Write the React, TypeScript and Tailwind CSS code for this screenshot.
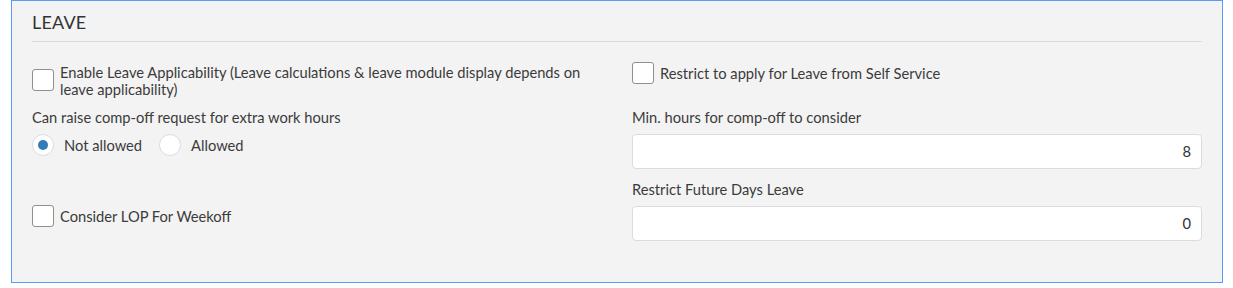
import React from "react";

function Checkbox() {
  return <span className="block w-[22px] h-[22px] shrink-0 rounded-[3px] border border-[#8f8f8f] bg-white" />;
}

function Radio({ checked }: { checked?: boolean }) {
  return (
    <span className="flex w-[22px] h-[22px] shrink-0 items-center justify-center rounded-full border border-[#dcdcdc] bg-white">
      {checked && <span className="block w-[10px] h-[10px] rounded-full bg-[#337ab7]" />}
    </span>
  );
}

function NumInput({ value }: { value: string }) {
  return (
    <div className="h-[35px] w-full rounded-[4px] border border-[#dcdcdc] bg-white flex items-center justify-end pr-[10px] text-[14.7px] text-[#333]">
      {value}
    </div>
  );
}

export default function App() {
  return (
    <div className="w-[1233px] h-[288px] bg-white" style={{ fontFamily: "Lato, 'Open Sans', sans-serif" }}>
      <div className="ml-[11px] w-[1212px] h-[283px] border border-[#5a9bf6] bg-[#f3f3f3] px-[20px] text-[#3b3b3b]">
        <div className="pt-[10px] text-[18px] leading-[22px] text-[#333] tracking-[0.2px]">LEAVE</div>
        <div className="mt-[8px] h-px bg-[#dcdcdc]" />
        <div className="grid grid-cols-2 gap-x-[30px] text-[14.7px]">
          {/* Row A */}
          <div className="mt-[20px] flex items-center gap-[6px]">
            <Checkbox />
            <span className="leading-[17px] pt-[2px] max-w-[545px]">
              Enable Leave Applicability (Leave calculations &amp; leave module display depends on leave applicability)
            </span>
          </div>
          <div className="mt-[20px] flex items-start gap-[6px]">
            <Checkbox />
            <span className="leading-[22px]">Restrict to apply for Leave from Self Service</span>
          </div>
          {/* Row B */}
          <div className="mt-[9px]">
            <div className="leading-[20px]">Can raise comp-off request for extra work hours</div>
            <div className="mt-[7px] flex items-center">
              <Radio checked />
              <span className="ml-[10px]">Not allowed</span>
              <span className="ml-[17px]"><Radio /></span>
              <span className="ml-[10px]">Allowed</span>
            </div>
          </div>
          <div className="mt-[9px]">
            <div className="leading-[20px]">Min. hours for comp-off to consider</div>
            <div className="mt-[7px]">
              <NumInput value="8" />
            </div>
          </div>
          {/* Row C */}
          <div className="mt-[10px] flex items-end">
            <div className="flex items-center gap-[6px] pb-[14px]">
              <Checkbox />
              <span>Consider LOP For Weekoff</span>
            </div>
          </div>
          <div className="mt-[10px]">
            <div className="leading-[20px]">Restrict Future Days Leave</div>
            <div className="mt-[7px]">
              <NumInput value="0" />
            </div>
          </div>
        </div>
      </div>
    </div>
  );
}
